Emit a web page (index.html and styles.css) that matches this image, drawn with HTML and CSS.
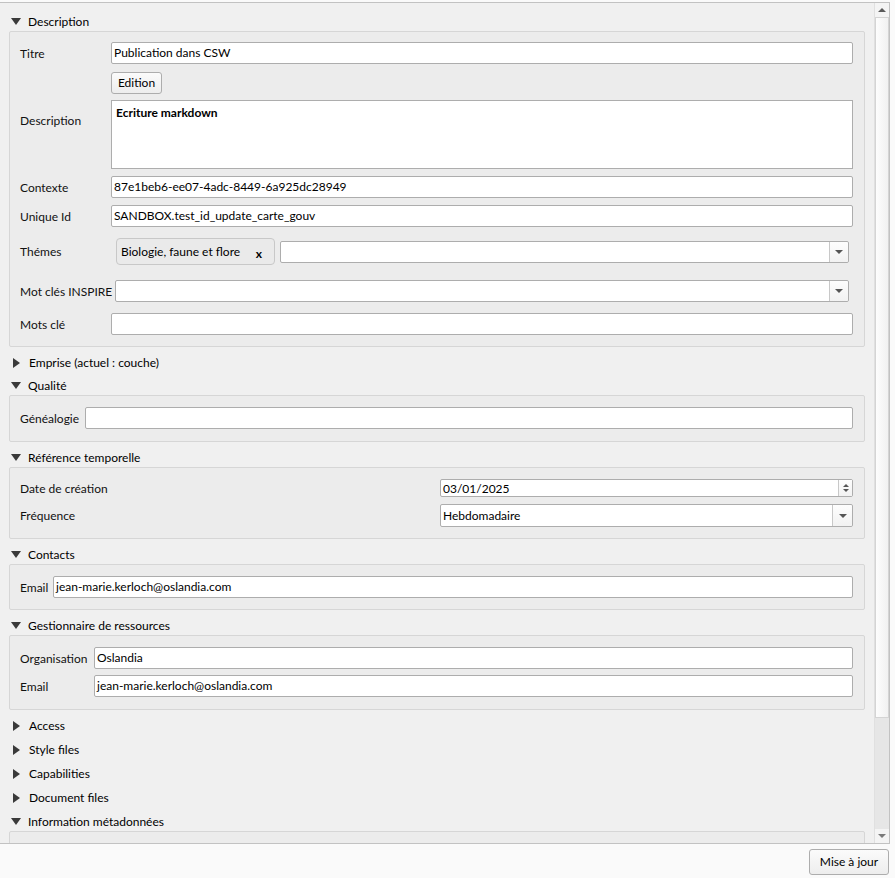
FILE: index.html
```html
<!DOCTYPE html>
<html lang="fr">
<head>
<meta charset="utf-8">
<title>Publication dans CSW</title>
<link rel="stylesheet" href="styles.css">
</head>
<body>
<div class="window">
  <div class="frame">
    <div class="viewport">
      <div class="content">

        <div class="hdr"><span class="tri-down"></span><span>Description</span></div>
        <div class="box box-desc">
          <div class="row h22">
            <div class="lbl w-desc">Titre</div>
            <div class="input grow">Publication dans CSW</div>
          </div>
          <div class="row mt8">
            <div class="lbl w-desc">Description</div>
            <div class="stack grow">
              <div class="btn btn-edition">Edition</div>
              <div class="textarea"><b>Ecriture markdown</b></div>
            </div>
          </div>
          <div class="row h22 mt7">
            <div class="lbl w-desc">Contexte</div>
            <div class="input grow">87e1beb6-ee07-4adc-8449-6a925dc28949</div>
          </div>
          <div class="row h22 mt7">
            <div class="lbl w-desc">Unique Id</div>
            <div class="input grow">SANDBOX.test_id_update_carte_gouv</div>
          </div>
          <div class="row h27 mt11">
            <div class="lbl w-desc">Thémes</div>
            <div class="chip"><span class="chip-text">Biologie, faune et flore</span><span class="chip-x">x</span></div>
            <div class="combo grow ml5 mr4"><span class="combo-text"></span><span class="combo-btn"><span class="arrow-down"></span></span></div>
          </div>
          <div class="row h22 mt15">
            <div class="lbl w-inspire">Mot clés INSPIRE</div>
            <div class="combo grow mr4"><span class="combo-text"></span><span class="combo-btn"><span class="arrow-down"></span></span></div>
          </div>
          <div class="row h22 mt11">
            <div class="lbl w-desc">Mots clé</div>
            <div class="input grow"></div>
          </div>
        </div>

        <div class="hdr collapsed tight"><span class="tri-right"></span><span>Emprise (actuel : couche)</span></div>

        <div class="hdr"><span class="tri-down"></span><span>Qualité</span></div>
        <div class="box box-qual">
          <div class="row h22">
            <div class="lbl w-qual">Généalogie</div>
            <div class="input grow"></div>
          </div>
        </div>

        <div class="hdr"><span class="tri-down"></span><span>Référence temporelle</span></div>
        <div class="box box-ref">
          <div class="row h18">
            <div class="lbl w-ref">Date de création</div>
            <div class="date grow"><span class="combo-text">03/01/2025</span><span class="spin"><span class="arrow-up small"></span><span class="arrow-down small"></span></span></div>
          </div>
          <div class="row h23 mt7">
            <div class="lbl w-ref">Fréquence</div>
            <div class="combo grow"><span class="combo-text">Hebdomadaire</span><span class="combo-btn wide"><span class="arrow-down"></span></span></div>
          </div>
        </div>

        <div class="hdr"><span class="tri-down"></span><span>Contacts</span></div>
        <div class="box box-contact">
          <div class="row h22">
            <div class="lbl w-contact">Email</div>
            <div class="input grow">jean-marie.kerloch@oslandia.com</div>
          </div>
        </div>

        <div class="hdr"><span class="tri-down"></span><span>Gestionnaire de ressources</span></div>
        <div class="box box-gest">
          <div class="row h22">
            <div class="lbl w-gest">Organisation</div>
            <div class="input grow">Oslandia</div>
          </div>
          <div class="row h22 mt6">
            <div class="lbl w-gest">Email</div>
            <div class="input grow">jean-marie.kerloch@oslandia.com</div>
          </div>
        </div>

        <div class="hdr collapsed"><span class="tri-right"></span><span>Access</span></div>
        <div class="hdr collapsed"><span class="tri-right"></span><span>Style files</span></div>
        <div class="hdr collapsed"><span class="tri-right"></span><span>Capabilities</span></div>
        <div class="hdr collapsed"><span class="tri-right"></span><span>Document files</span></div>

        <div class="hdr"><span class="tri-down"></span><span>Information métadonnées</span></div>
        <div class="box box-info"></div>

      </div>
    </div>
    <div class="scrollbar">
      <div class="sb-btn"><span class="sb-arrow-up"></span></div>
      <div class="sb-thumb"></div>
      <div class="sb-track"></div>
      <div class="sb-btn"><span class="sb-arrow-down"></span></div>
    </div>
  </div>
  <div class="footer">
    <div class="btn btn-update">Mise à jour</div>
  </div>
</div>
</body>
</html>
```

FILE: styles.css
```css
* { box-sizing: border-box; }

html, body {
  margin: 0;
  padding: 0;
}

body {
  background: #fafafa;
  font-family: "Lato", "Noto Sans", sans-serif;
  font-size: 12px;
  color: #000;
}

.window {
  width: 895px;
  height: 878px;
  display: flex;
  flex-direction: column;
  padding-top: 2px;
}

.frame {
  width: 890px;
  height: 842px;
  border-top: 1px solid #c2c2c2;
  border-right: 1px solid #c2c2c2;
  border-bottom: 1px solid #c2c2c2;
  background: #f0f0f0;
  display: flex;
  flex: none;
}

.viewport {
  flex: 1;
  overflow: hidden;
  position: relative;
}

.content {
  padding: 9px 9px 0 9px;
  display: flex;
  flex-direction: column;
}

/* collapsible headers */
.hdr {
  height: 19px;
  display: flex;
  align-items: center;
  line-height: 19px;
  color: #000;
}

.hdr.collapsed { margin-bottom: 5px; }
.hdr.collapsed.tight { margin-bottom: 4px; }

.tri-down {
  width: 0;
  height: 0;
  border-left: 5.5px solid transparent;
  border-right: 5.5px solid transparent;
  border-top: 7px solid #3a3a3a;
  margin-left: 2px;
  margin-right: 7px;
}

.tri-right {
  width: 0;
  height: 0;
  border-top: 5px solid transparent;
  border-bottom: 5px solid transparent;
  border-left: 7px solid #3a3a3a;
  margin-left: 4px;
  margin-right: 9px;
}

/* group boxes */
.box {
  background: #ececec;
  border: 1px solid #d6d6d6;
  border-radius: 2px;
  margin-bottom: 6px;
  padding: 10px 11px 0 10px;
  display: flex;
  flex-direction: column;
}

.box-desc { height: 316px; }
.box-qual { height: 47px; padding-top: 11px; }
.box-ref { height: 72px; padding-top: 11px; }
.box-contact { height: 46px; padding-top: 11px; }
.box-gest { height: 75px; padding-top: 11px; }
.box-info { height: 20px; margin-bottom: 0; }

.row {
  display: flex;
  align-items: center;
}

.h18 { height: 18px; }
.h22 { height: 22px; }
.h23 { height: 23px; }
.h27 { height: 27px; }
.mt6 { margin-top: 6px; }
.mt7 { margin-top: 7px; }
.mt8 { margin-top: 8px; }
.mt11 { margin-top: 11px; }
.mt12 { margin-top: 12px; }
.mt15 { margin-top: 15px; }
.ml5 { margin-left: 5px; }
.mr4 { margin-right: 4px; }

.lbl {
  flex: none;
  white-space: nowrap;
  color: #111;
}

.w-desc { width: 91px; }
.w-inspire { width: 95px; }
.w-qual { width: 65px; }
.w-ref { width: 420px; }
.w-contact { width: 33px; }
.w-gest { width: 74px; }

.grow { flex: 1; min-width: 0; }

.stack {
  display: flex;
  flex-direction: column;
  align-items: flex-start;
}

.input {
  height: 22px;
  background: #fff;
  border: 1px solid #adadad;
  border-radius: 2px;
  padding-left: 2px;
  line-height: 20px;
  white-space: nowrap;
  overflow: hidden;
}

.textarea {
  width: 100%;
  height: 69px;
  margin-top: 6px;
  background: #fff;
  border: 1px solid #adadad;
  padding: 3px 4px;
  line-height: 17px;
}

.btn {
  border: 1px solid #adadad;
  border-radius: 3px;
  background: linear-gradient(#fbfbfb, #ededed);
  text-align: center;
  white-space: nowrap;
}

.btn-edition {
  width: 51px;
  height: 22px;
  line-height: 20px;
}

.chip {
  flex: none;
  width: 159px;
  height: 27px;
  margin-left: 5px;
  border: 1px solid #c8c8c8;
  border-radius: 4px;
  background: #eaeaea;
  display: flex;
  align-items: center;
  justify-content: space-between;
  padding-left: 4px;
  padding-right: 12px;
}

.chip-text { white-space: nowrap; }

.chip-x {
  font-weight: bold;
  margin-top: 3px;
  font-size: 12px;
}

.combo, .date {
  height: 22px;
  background: #fff;
  border: 1px solid #adadad;
  border-radius: 2px;
  display: flex;
  align-items: stretch;
}

.date { height: 18px; }
.h23 .combo { height: 23px; }

.combo-text {
  flex: 1;
  padding-left: 2px;
  white-space: nowrap;
  display: flex;
  align-items: center;
}

.combo-btn {
  flex: none;
  width: 19px;
  border-left: 1px solid #c8c8c8;
  background: linear-gradient(#fdfdfd, #f2f2f2);
  display: flex;
  align-items: center;
  justify-content: center;
  border-radius: 0 2px 2px 0;
}

.combo-btn.wide { width: 20px; }

.arrow-down {
  width: 0;
  height: 0;
  border-left: 4px solid transparent;
  border-right: 4px solid transparent;
  border-top: 4px solid #555;
}

.arrow-up {
  width: 0;
  height: 0;
  border-left: 4px solid transparent;
  border-right: 4px solid transparent;
  border-bottom: 4px solid #555;
}

.arrow-up.small, .arrow-down.small {
  border-left-width: 3px;
  border-right-width: 3px;
}
.arrow-up.small { border-bottom-width: 3px; margin-bottom: 2px; }
.arrow-down.small { border-top-width: 3px; }

.spin {
  flex: none;
  width: 14px;
  border-left: 1px solid #c8c8c8;
  background: linear-gradient(#fdfdfd, #f2f2f2);
  display: flex;
  flex-direction: column;
  align-items: center;
  justify-content: center;
}

/* scrollbar */
.scrollbar {
  flex: none;
  width: 15px;
  display: flex;
  flex-direction: column;
  background: #e6e6e6;
  border-left: 1px solid #e0e0e0;
}

.sb-btn {
  height: 14px;
  flex: none;
  background: #f4f4f4;
  display: flex;
  align-items: center;
  justify-content: center;
}

.sb-arrow-up {
  width: 0;
  height: 0;
  border-left: 4px solid transparent;
  border-right: 4px solid transparent;
  border-bottom: 4px solid #5a5a5a;
}

.sb-arrow-down {
  width: 0;
  height: 0;
  border-left: 4px solid transparent;
  border-right: 4px solid transparent;
  border-top: 4px solid #7a7a7a;
}

.sb-thumb {
  height: 701px;
  flex: none;
  background: linear-gradient(to right, #fdfdfd, #f1f1f1);
  border: 1px solid #d4d4d4;
}

.sb-track {
  flex: 1;
  background: #e6e6e6;
}

/* footer */
.footer {
  flex: 1;
  display: flex;
  justify-content: flex-end;
  align-items: flex-start;
  padding-top: 5px;
  padding-right: 6px;
}

.btn-update {
  width: 80px;
  height: 26px;
  line-height: 24px;
}
```
